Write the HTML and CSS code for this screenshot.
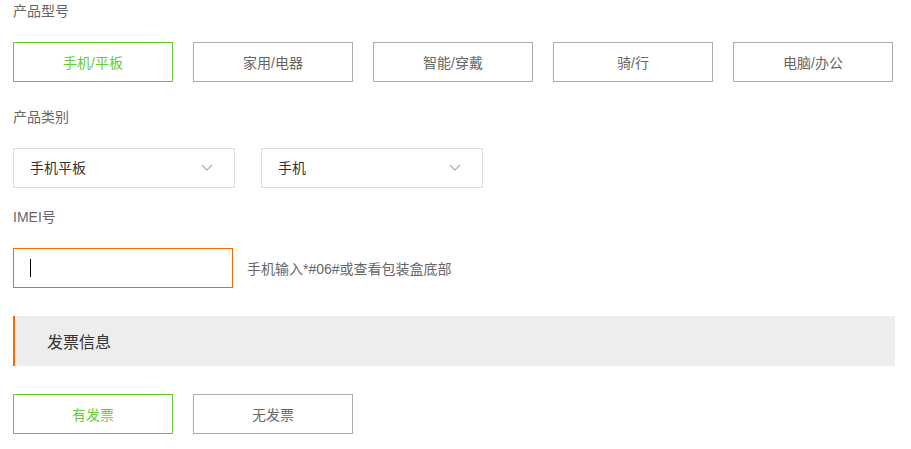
FILE: index.html
```html
<!DOCTYPE html>
<html lang="zh-CN">
<head>
<meta charset="utf-8">
<title>产品信息</title>
<link rel="stylesheet" href="styles.css">
</head>
<body>
<div class="form">
  <div class="label first">产品型号</div>
  <div class="btn-row">
    <div class="opt active">手机/平板</div>
    <div class="opt">家用/电器</div>
    <div class="opt">智能/穿戴</div>
    <div class="opt">骑/行</div>
    <div class="opt">电脑/办公</div>
  </div>

  <div class="label second">产品类别</div>
  <div class="select-row">
    <div class="select">
      <span>手机平板</span>
      <svg class="chev" width="12" height="7" viewBox="0 0 12 7"><polyline points="1,1 6,6 11,1" fill="none" stroke="#b4b4b4" stroke-width="1.4"/></svg>
    </div>
    <div class="select">
      <span>手机</span>
      <svg class="chev" width="12" height="7" viewBox="0 0 12 7"><polyline points="1,1 6,6 11,1" fill="none" stroke="#b4b4b4" stroke-width="1.4"/></svg>
    </div>
  </div>

  <div class="label third">IMEI号</div>
  <div class="imei-row">
    <div class="input"><span class="caret"></span></div>
    <span class="hint">手机输入*#06#或查看包装盒底部</span>
  </div>

  <div class="section">发票信息</div>

  <div class="btn-row invoice">
    <div class="opt active">有发票</div>
    <div class="opt">无发票</div>
  </div>
</div>
</body>
</html>
```

FILE: styles.css
```css
* { box-sizing: border-box; }
html, body { margin: 0; padding: 0; background: #fff; }
body {
  font-family: "Liberation Sans", "Noto Sans CJK SC", sans-serif;
  font-size: 14px;
}
.form { padding: 0 16px 0 13px; }

.label {
  color: #666;
  font-size: 14px;
  line-height: 22px;
  height: 22px;
}
.label.second { margin-top: 24px; }
.label.third { margin-top: 18px; }

.btn-row {
  display: flex;
  gap: 20px;
  margin-top: 20px;
}
.opt {
  width: 160px;
  height: 40px;
  border: 1px solid #acacac;
  color: #666;
  display: flex;
  align-items: center;
  justify-content: center;
  font-size: 14px;
}
.opt.active {
  border-color: #66cc33;
  color: #66cc33;
}

.select-row {
  display: flex;
  gap: 26px;
  margin-top: 20px;
}
.select {
  width: 222px;
  height: 40px;
  border: 1px solid #dddddd;
  display: flex;
  align-items: center;
  justify-content: space-between;
  padding: 0 21px 2px 16px;
  color: #333;
  font-size: 14px;
}
.chev { display: block; }

.imei-row {
  display: flex;
  align-items: center;
  margin-top: 20px;
}
.input {
  width: 220px;
  height: 40px;
  border: 1px solid #ff6600;
  display: flex;
  align-items: center;
  padding-left: 16px;
}
.caret {
  display: block;
  width: 1px;
  height: 18px;
  background: #000;
}
.hint {
  margin-left: 14px;
  color: #666;
  font-size: 14px;
}

.section {
  margin-top: 28px;
  height: 50px;
  background: #ededed;
  border-left: 2px solid #ff6600;
  display: flex;
  align-items: center;
  padding-left: 32px;
  color: #333;
  font-size: 16px;
}

.btn-row.invoice { margin-top: 28px; }
```
